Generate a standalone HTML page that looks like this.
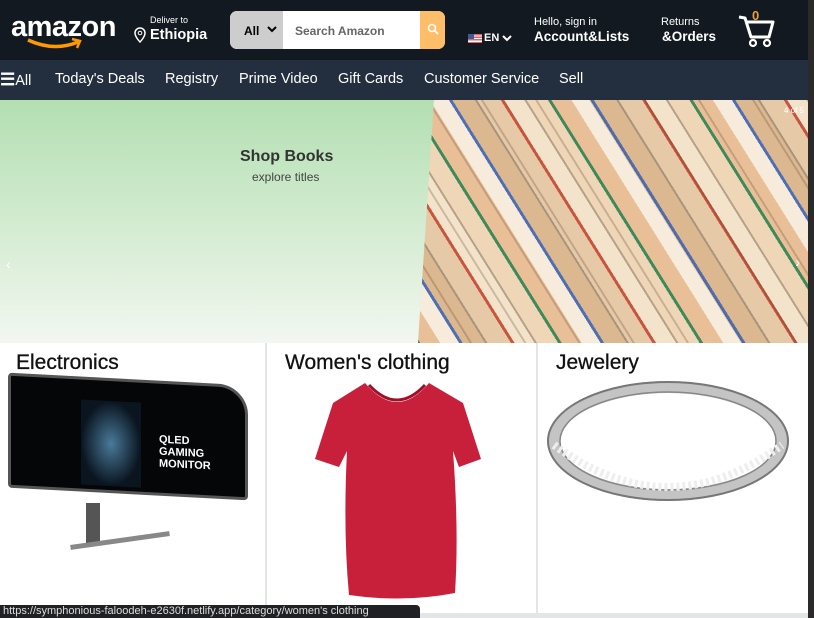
<!DOCTYPE html>
<html><head><style>
*{margin:0;padding:0;box-sizing:border-box}
html,body{width:814px;height:618px;overflow:hidden}
body{font-family:"Liberation Sans",sans-serif;background:#e3e6e6;position:relative}
.hd{position:absolute;left:0;top:0;width:808px;height:60px;background:#131921;color:#fff}
.nav{position:absolute;left:0;top:60px;width:808px;height:40px;background:#232f3e;color:#fff;font-size:14.5px}
.nav span{position:absolute;top:11px}
.sb{position:absolute;right:0;top:0;width:6px;height:618px;background:#2a2a2a}
.hero{position:absolute;left:0;top:100px;width:808px;height:243px;overflow:hidden;background:linear-gradient(#b3dfb2,#dff0dc 70%,#f2f7f1)}
.books{position:absolute;left:418px;top:0;width:390px;height:243px;overflow:hidden;background:#e9d6b8;clip-path:polygon(16px 0,100% 0,100% 100%,0 100%)}
.card{position:absolute;top:343px;height:270px;background:#fff;overflow:hidden}
.card h2{font-size:21px;font-weight:normal;color:#111;position:absolute;top:8px;left:16px;-webkit-text-stroke:.3px #111}
</style></head><body>
<div class="hd">
 <div style="position:absolute;left:11px;top:11px;font-size:29px;font-weight:bold;letter-spacing:-0.5px">amazon</div>
 <svg style="position:absolute;left:26px;top:36px" width="58" height="16"><path d="M2 4 Q28 16 52 6" stroke="#f90" stroke-width="3.5" fill="none"/><path d="M46 3 L54 5 L51 12" stroke="#f90" stroke-width="2.5" fill="none"/></svg>
 <svg style="position:absolute;left:134px;top:27px" width="12" height="16"><path d="M6 1a5 5 0 0 1 5 5c0 4-5 9-5 9S1 10 1 6a5 5 0 0 1 5-5z" stroke="#fff" stroke-width="1.5" fill="none"/><circle cx="6" cy="6" r="1.8" stroke="#fff" fill="none"/></svg>
 <div style="position:absolute;left:150px;top:15px;font-size:9px">Deliver to</div>
 <div style="position:absolute;left:150px;top:27px;font-size:14.5px;font-weight:bold">Ethiopia</div>
 <div style="position:absolute;left:230px;top:11px;width:215px;height:38px;border-radius:7px;overflow:hidden;background:#fff">
  <div style="position:absolute;left:0;top:0;width:53px;height:38px;background:#cdcdcd;color:#000;font-size:12px;font-weight:bold;padding:13px 0 0 14px">All <svg style="position:absolute;left:37px;top:15px" width="10" height="7"><path d="M1 1 L5 5 L9 1" stroke="#000" stroke-width="2" fill="none"/></svg></div>
  <div style="position:absolute;left:65px;top:13px;font-size:12px;color:#666;font-weight:bold">Search Amazon</div>
  <div style="position:absolute;right:0;top:0;width:25px;height:38px;background:#febd69"><svg style="margin:12px 0 0 7px" width="12" height="12"><circle cx="5" cy="5" r="3.5" stroke="#fff" stroke-width="1.6" fill="none"/><path d="M7.5 7.5 L11 11" stroke="#fff" stroke-width="1.8"/></svg></div>
 </div>
 <div style="position:absolute;left:468px;top:34px;width:14px;height:9px;background:repeating-linear-gradient(#d66 0 1.3px,#fff 1.3px 2.6px)"><div style="width:6px;height:5px;background:#3c5a9a"></div></div>
 <div style="position:absolute;left:484px;top:32px;font-size:11px;font-weight:bold">EN</div>
 <svg style="position:absolute;left:502px;top:35px" width="10" height="7"><path d="M1 1 L5 5 L9 1" stroke="#fff" stroke-width="2" fill="none"/></svg>
 <div style="position:absolute;left:534px;top:16px;font-size:11px">Hello, sign in</div>
 <div style="position:absolute;left:534px;top:29px;font-size:13.5px;font-weight:bold">Account&amp;Lists</div>
 <div style="position:absolute;left:661px;top:16px;font-size:11px">Returns</div>
 <div style="position:absolute;left:662px;top:29px;font-size:13.5px;font-weight:bold">&amp;Orders</div>
 <svg style="position:absolute;left:738px;top:12px" width="38" height="36"><path d="M1 5 L7 6 L13 25 L31 25 L35 10 L9 10" stroke="#fff" stroke-width="3" fill="none" stroke-linejoin="round"/><circle cx="15" cy="31" r="3" stroke="#fff" stroke-width="2.2" fill="none"/><circle cx="29" cy="31" r="3" stroke="#fff" stroke-width="2.2" fill="none"/></svg>
 <div style="position:absolute;left:752px;top:8px;font-size:13px;color:#e8a035;font-weight:bold">0</div>
</div>
<div class="nav">
 <span style="left:0;top:10px"><b style="font-size:17px">&#9776;</b>All</span>
 <span style="left:55px">Today's Deals</span><span style="left:165px">Registry</span><span style="left:239px">Prime Video</span><span style="left:338px">Gift Cards</span><span style="left:424px">Customer Service</span><span style="left:559px">Sell</span>
</div>
<div class="hero">
 <div style="position:absolute;left:240px;top:48px;font-size:16px;font-weight:bold;color:#333">Shop Books</div>
 <div style="position:absolute;left:252px;top:70px;font-size:12px;color:#444">explore titles</div>
 <div style="position:absolute;left:6px;top:156px;color:#fff;font-size:14px">&#8249;</div>
 <div class="books">
  <div style="position:absolute;left:-200px;top:-250px;width:800px;height:800px;transform:rotate(-32deg);background:repeating-linear-gradient(90deg,#e6caa8 0 20px,#c9553f 20px 23px,#f3e3cb 23px 40px,#b7a289 40px 42px,#efd6b6 42px 60px,#3f8a5b 60px 63px,#e9bf98 63px 80px,#f7ecdc 80px 96px,#4f6fb5 96px 99px,#dcb890 99px 118px,#a9947c 118px 120px)"></div>
  <div style="position:absolute;left:0;top:0;width:390px;height:243px;background:repeating-linear-gradient(58deg,transparent 0 44px,rgba(90,60,40,.25) 44px 46px)"></div>
  <div style="position:absolute;right:4px;top:6px;font-size:8px;color:#fff">4 of 5</div>
  <div style="position:absolute;right:8px;top:154px;color:#fff;font-size:14px">&#8250;</div>
 </div>
</div>
<div class="card" style="left:0;width:265px"><h2>Electronics</h2>
 <div style="position:absolute;left:8px;top:36px;width:240px;height:115px;background:#050608;border:3px solid #555;border-radius:4px 30px 4px 4px;transform:skewY(3deg)"><div style="position:absolute;left:148px;top:50px;color:#fff;font-size:11px;font-weight:bold;line-height:12px">QLED<br>GAMING<br>MONITOR</div><div style="position:absolute;left:70px;top:20px;width:60px;height:85px;background:radial-gradient(#4a7a9a,#0a1520 70%)"></div></div>
 <div style="position:absolute;left:86px;top:160px;width:14px;height:40px;background:#555"></div>
 <div style="position:absolute;left:70px;top:195px;width:100px;height:5px;background:#888;transform:rotate(-8deg)"></div>
</div>
<div class="card" style="left:267px;width:269px"><h2 style="left:18px">Women's clothing</h2>
 <svg style="position:absolute;left:46px;top:38px" width="170" height="222"><path d="M52 2 Q84 40 116 2 L150 22 L168 78 L146 86 L140 70 Q146 150 142 212 Q90 222 36 214 Q30 150 34 70 L26 86 L2 78 L20 22 Z" fill="#c8203a"/><path d="M56 4 Q84 34 112 4" stroke="#a01028" stroke-width="3" fill="none"/></svg>
</div>
<div class="card" style="left:538px;width:270px"><h2 style="left:18px">Jewelery</h2>
 <svg style="position:absolute;left:8px;top:36px" width="246" height="125"><ellipse cx="122" cy="62" rx="114" ry="54" stroke="#c4c4c4" stroke-width="12" fill="none"/><ellipse cx="122" cy="62" rx="120" ry="59" stroke="#777" stroke-width="2" fill="none"/><ellipse cx="122" cy="62" rx="108" ry="49" stroke="#888" stroke-width="1.5" fill="none"/><path d="M8 66 Q122 150 236 66" stroke="#eee" stroke-width="8" stroke-dasharray="3 3" fill="none"/></svg>
</div>
<div class="sb"></div>
<div style="position:absolute;left:0;top:605px;width:420px;height:13px;background:#202124;border-radius:0 4px 0 0;color:#ddd;font-size:11px;padding-left:3px;line-height:13px;white-space:nowrap;overflow:hidden">https://symphonious-faloodeh-e2630f.netlify.app/category/women's clothing</div>
</body></html>
